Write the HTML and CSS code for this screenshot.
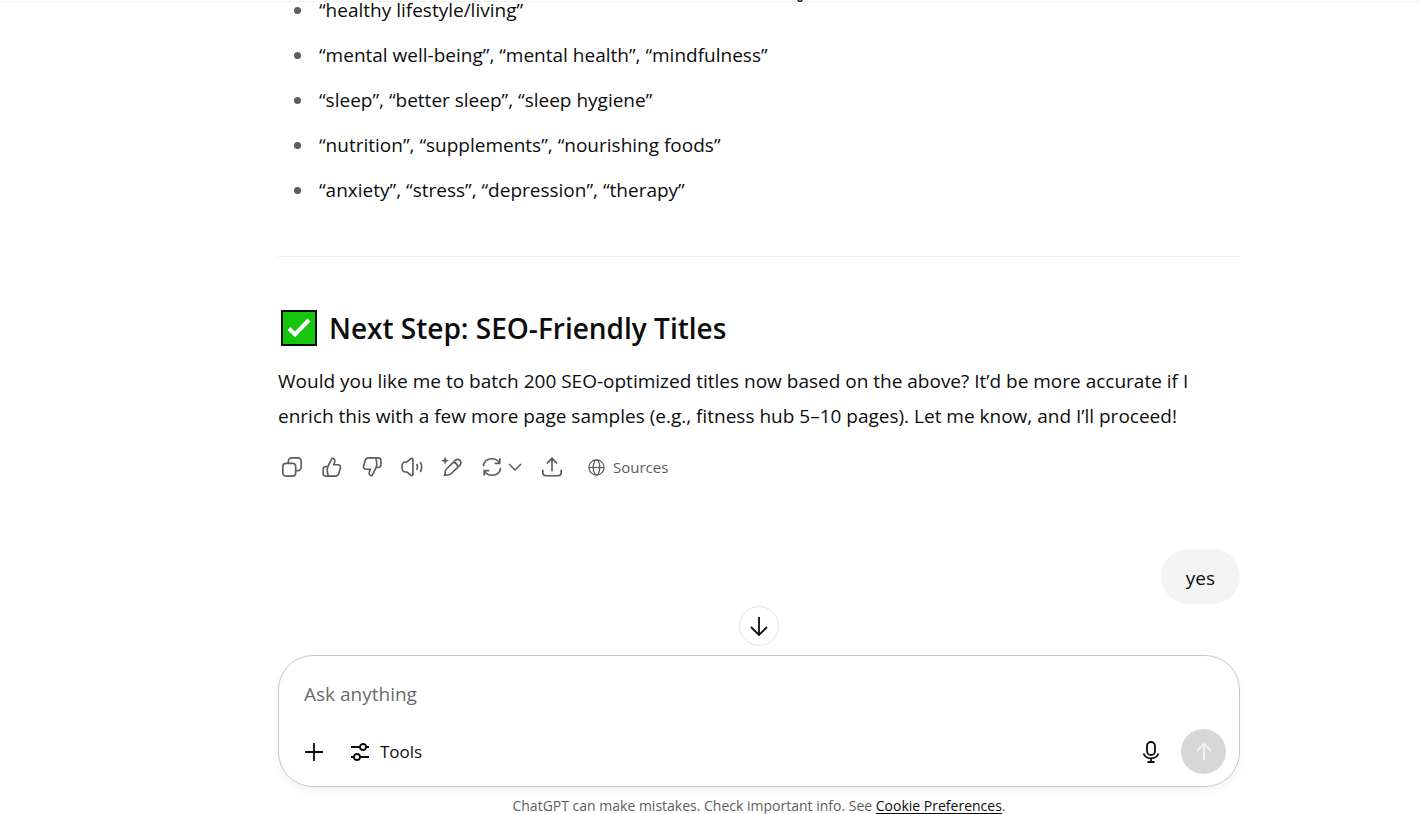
FILE: index.html
```
<!DOCTYPE html>
<html lang="en">
<head>
<meta charset="UTF-8">
<meta name="viewport" content="width=device-width, initial-scale=1">
<title>ChatGPT</title>
<link rel="stylesheet" href="styles.css">
</head>
<body>

<header class="topbar">
    <svg width="6" height="2" viewBox="0 0 6 2"><path d="M1 0c.4 1.800 3.600 1.800 4 0" fill="none" stroke="#333"/></svg>
</header>

<main class="thread">
    <article class="answer">
        <ul>
            <li>“healthy lifestyle/living”</li>
            <li>“mental well-being”, “mental health”, “mindfulness”</li>
            <li>“sleep”, “better sleep”, “sleep hygiene”</li>
            <li>“nutrition”, “supplements”, “nourishing foods”</li>
            <li>“anxiety”, “stress”, “depression”, “therapy”</li>
        </ul>
        <hr>
        <h2>
            <svg class="check" viewBox="0 0 36 36" role="img" aria-label="Done"><rect x="1" y="1" width="34" height="34" fill="#16c60c" stroke="#0d0d0d" stroke-width="2"/><path d="M8 18.500l6 6L28 10" fill="none" stroke="#fff" stroke-width="4"/></svg>
            Next Step: SEO-Friendly Titles
        </h2>
        <p>Would you like me to batch 200 SEO-optimized titles now based on the above? It’d be more accurate if I enrich this with a few more page samples (e.g., fitness hub 5–10 pages). Let me know, and I’ll proceed!</p>

        <div class="actions">
            <button aria-label="Copy"><svg viewBox="0 0 24 24"><rect x="2" y="8" width="14" height="14" rx="3.500"/><path d="M8 7.500V5.500A3.500 3.500 0 0 1 11.500 2h7A3.500 3.500 0 0 1 22 5.500v7a3.500 3.500 0 0 1-3.500 3.500h-2"/></svg></button>
            <button aria-label="Good response"><svg viewBox="0 0 24 24"><path d="M7.500 11.500L12 2.500c2.400 0 3.500 1.500 3 3.500l-1 3.500h4.500c2 0 3.200 1.600 2.700 3.400l-1.800 6.300c-.5 1.700-1.800 2.800-3.600 2.800H5.500c-2 0-3.200-1.200-3.200-3.200v-4c0-2 1.200-3.300 3.200-3.300z"/><path d="M7.500 11.500c-1 2.500-1 6 .5 10.300"/></svg></button>
            <button aria-label="Bad response"><svg viewBox="0 0 24 24"><path d="M16.500 12.500L12 21.500c-2.400 0-3.500-1.500-3-3.500l1-3.500H5.500c-2 0-3.200-1.600-2.700-3.400l1.800-6.300C5.100 3.100 6.400 2 8.200 2h10.300c2 0 3.200 1.200 3.200 3.200v4c0 2-1.200 3.300-3.200 3.300z"/><path d="M16.500 12.500c1-2.500 1-6-.5-10.300"/></svg></button>
            <button aria-label="Read aloud"><svg viewBox="0 0 24 24"><path d="M11.500 2.500c1 0 1.500.6 1.500 1.500v16c0 1.300-1.200 1.900-2.200 1.200L6.500 17.500H4.200c-1.700 0-2.200-1-2.700-2.500-.6-2-.6-4 0-6 .5-1.500 1-2.500 2.700-2.500h2.300l4.200-3.700c.3-.2.500-.3.800-.3z"/><path d="M17 8.500c1.200 2.200 1.200 4.800 0 7M21 6.500c2 3.500 2 7.500 0 11"/></svg></button>
            <button aria-label="Edit in canvas"><svg viewBox="0 0 24 24"><path d="M4 21l.8-4.500c.2-1 .5-1.600 1.200-2.300L15.500 4.700a3.600 3.600 0 0 1 5.200 5.200L11 19.400c-.7.700-1.400 1-2.300 1.100zM13.500 6.700c2.300.6 4.400 2.600 5.200 5.200"/><path class="solid" d="M4.500.5L5.700 3.800 9 5 5.700 6.200 4.500 9.500 3.300 6.200 0 5l3.300-1.200z"/></svg></button>
            <button class="retry" aria-label="Switch model"><svg viewBox="0 0 24 24"><path d="M2.500 11c.8-5 4.500-8 9.500-8 3.500 0 6.500 1.700 8.200 4.500M20.500 2.500v5.500H15M21.500 13c-.8 5-4.500 8-9.500 8-3.500 0-6.500-1.700-8.200-4.500M3.500 21.500V16H9"/></svg><svg class="chevron" viewBox="0 0 16 16"><path d="M2 5l6 6 6-6"/></svg></button>
            <button aria-label="Share"><svg viewBox="0 0 24 24"><path d="M12 16.500V2.500M6.500 8L12 2.500 17.500 8M2 15v3c0 2.200 1.300 3.500 3.500 3.500h13c2.200 0 3.500-1.300 3.500-3.500v-3"/></svg></button>
            <button class="sources"><svg viewBox="0 0 18 18"><circle cx="9" cy="9" r="8"/><ellipse cx="9" cy="9" rx="3.500" ry="8"/><path d="M1 9h16"/></svg>Sources</button>
        </div>
    </article>

    <div class="message">
        <div class="bubble">yes</div>
    </div>
</main>

<div class="bottom">
    <button class="scroll-down" aria-label="Scroll to bottom"><svg viewBox="0 0 20 20"><path d="M10 1v18M2 11l8 8 8-8"/></svg></button>

    <form class="composer">
        <textarea rows="1" placeholder="Ask anything" aria-label="Message"></textarea>
        <div class="tools">
            <button type="button" aria-label="Add files"><svg viewBox="0 0 20 20"><path d="M10 1v18M1 10h18"/></svg></button>
            <button type="button" class="tools-btn"><svg viewBox="0 0 20 20"><path d="M1 5h9M16 5h3M1 15h3M10 15h9"/><circle cx="13" cy="5" r="3"/><circle cx="7" cy="15" r="3"/></svg>Tools</button>
            <button type="button" class="mic" aria-label="Dictate"><svg viewBox="0 0 20 22"><rect x="6" y="1" width="8" height="13" rx="4"/><path d="M2.500 12.500c1.200 3 4 4.800 7.500 4.800s6.300-1.800 7.500-4.800M10 17.500V21M6.500 21h7"/></svg></button>
            <button type="submit" class="send" aria-label="Send"><svg viewBox="0 0 20 20"><path d="M10 18V2M3 9l7-7 7 7"/></svg></button>
        </div>
    </form>

    <footer>ChatGPT can make mistakes. Check important info. See <a href="#">Cookie Preferences</a>.</footer>
</div>

</body>
</html>
```
FILE: styles.css
```
*{
    box-sizing:border-box;
}

body{
    margin:0;
    height:100vh;
    display:flex;
    flex-direction:column;
    overflow:hidden;
    background:#fff;
    color:#0d0d0d;
    font-family:"Segoe UI", "Open Sans", "Noto Sans", sans-serif;
    font-size:19px;
    line-height:35px;
}

button{
    display:flex;
    align-items:center;
    justify-content:center;
    padding:0;
    border:none;
    background:none;
    color:inherit;
    font:inherit;
    cursor:pointer;
}

svg{
    flex:none;
    fill:none;
    stroke:currentColor;
    stroke-width:1.8;
}

.topbar{
    flex:none;
    height:2px;
    padding-left:97px;
    display:flex;
    justify-content:center;
    border-bottom:1px solid #f0f0f0;
}

.topbar svg{
    margin-left:82px;
}

.thread, .bottom{
    padding-left:97px;
    display:flex;
    flex-direction:column;
    align-items:center;
}

.thread{
    flex:1;
    min-height:0;
    justify-content:flex-end;
    overflow:hidden;
    padding-bottom:51px;
}

.answer, .message, .composer{
    width:100%;
    max-width:962px;
}

.answer{
    flex:none;
    margin-bottom:62px;
}

ul{
    margin:0;
    padding-left:41px;
    list-style:none;
}

li{
    display:flex;
    align-items:center;
    margin-bottom:10px;
}

li::before{
    content:"";
    width:7px;
    height:7px;
    margin-left:-25px;
    margin-right:18px;
    border-radius:50%;
    background:#5d5d5d;
}

hr{
    margin:48px 0 53px;
    border:none;
    border-top:1px solid #f0f0f0;
}

h2{
    display:flex;
    align-items:center;
    gap:12px;
    margin:0 0 18px;
    padding-left:3px;
    font-size:28px;
    font-weight:600;
    line-height:35px;
}

.check{
    width:36px;
    height:36px;
}

p{
    margin:0 0 13px;
}

.actions{
    display:flex;
    height:40px;
    margin-left:-6px;
    color:#5d5d5d;
}

.actions button{
    width:40px;
}

.actions svg{
    width:22px;
    height:22px;
}

.actions .solid{
    fill:currentColor;
    stroke:none;
}

.actions .retry{
    width:60px;
    gap:4px;
}

.actions .retry .chevron{
    width:16px;
    height:16px;
    stroke-width:1.5;
}

.actions .sources{
    width:auto;
    margin-left:16px;
    gap:8px;
    font-size:15px;
}

.actions .sources svg{
    width:17px;
    height:17px;
    stroke-width:1.3;
}

.message{
    flex:none;
    display:flex;
    justify-content:flex-end;
}

.bubble{
    padding:12px 25px 8px;
    border-radius:28px;
    background:#f4f4f4;
}

.bottom{
    position:relative;
    flex:none;
}

.scroll-down{
    position:absolute;
    bottom:calc(100% + 9px);
    width:40px;
    height:40px;
    border:1px solid #e3e3e3;
    border-radius:50%;
    background:#fff;
}

.scroll-down svg{
    width:20px;
    height:20px;
}

.composer{
    padding:21px 13px 12px 25px;
    border:1px solid #c8c8c8;
    border-radius:35px;
    background:#fff;
    box-shadow:0 4px 10px rgba(0,0,0,0.05);
}

textarea{
    display:block;
    width:100%;
    height:35px;
    padding:0;
    border:none;
    outline:none;
    resize:none;
    font:inherit;
}

textarea::placeholder{
    color:#6b6b6b;
}

.tools{
    display:flex;
    align-items:center;
    height:45px;
    margin-top:17px;
    font-size:17px;
}

.tools svg{
    width:20px;
    height:20px;
}

.tools-btn{
    gap:10px;
    margin-left:26px;
}

.mic{
    margin-left:auto;
    margin-right:20px;
}

.tools .mic svg{
    height:22px;
}

.send{
    width:45px;
    height:45px;
    border-radius:50%;
    background:#d7d7d7;
    color:#f4f4f4;
}

footer{
    padding-top:11px;
    color:#5d5d5d;
    font-size:14px;
    line-height:16px;
}

footer a{
    color:#0d0d0d;
    text-underline-offset:2px;
}
```
